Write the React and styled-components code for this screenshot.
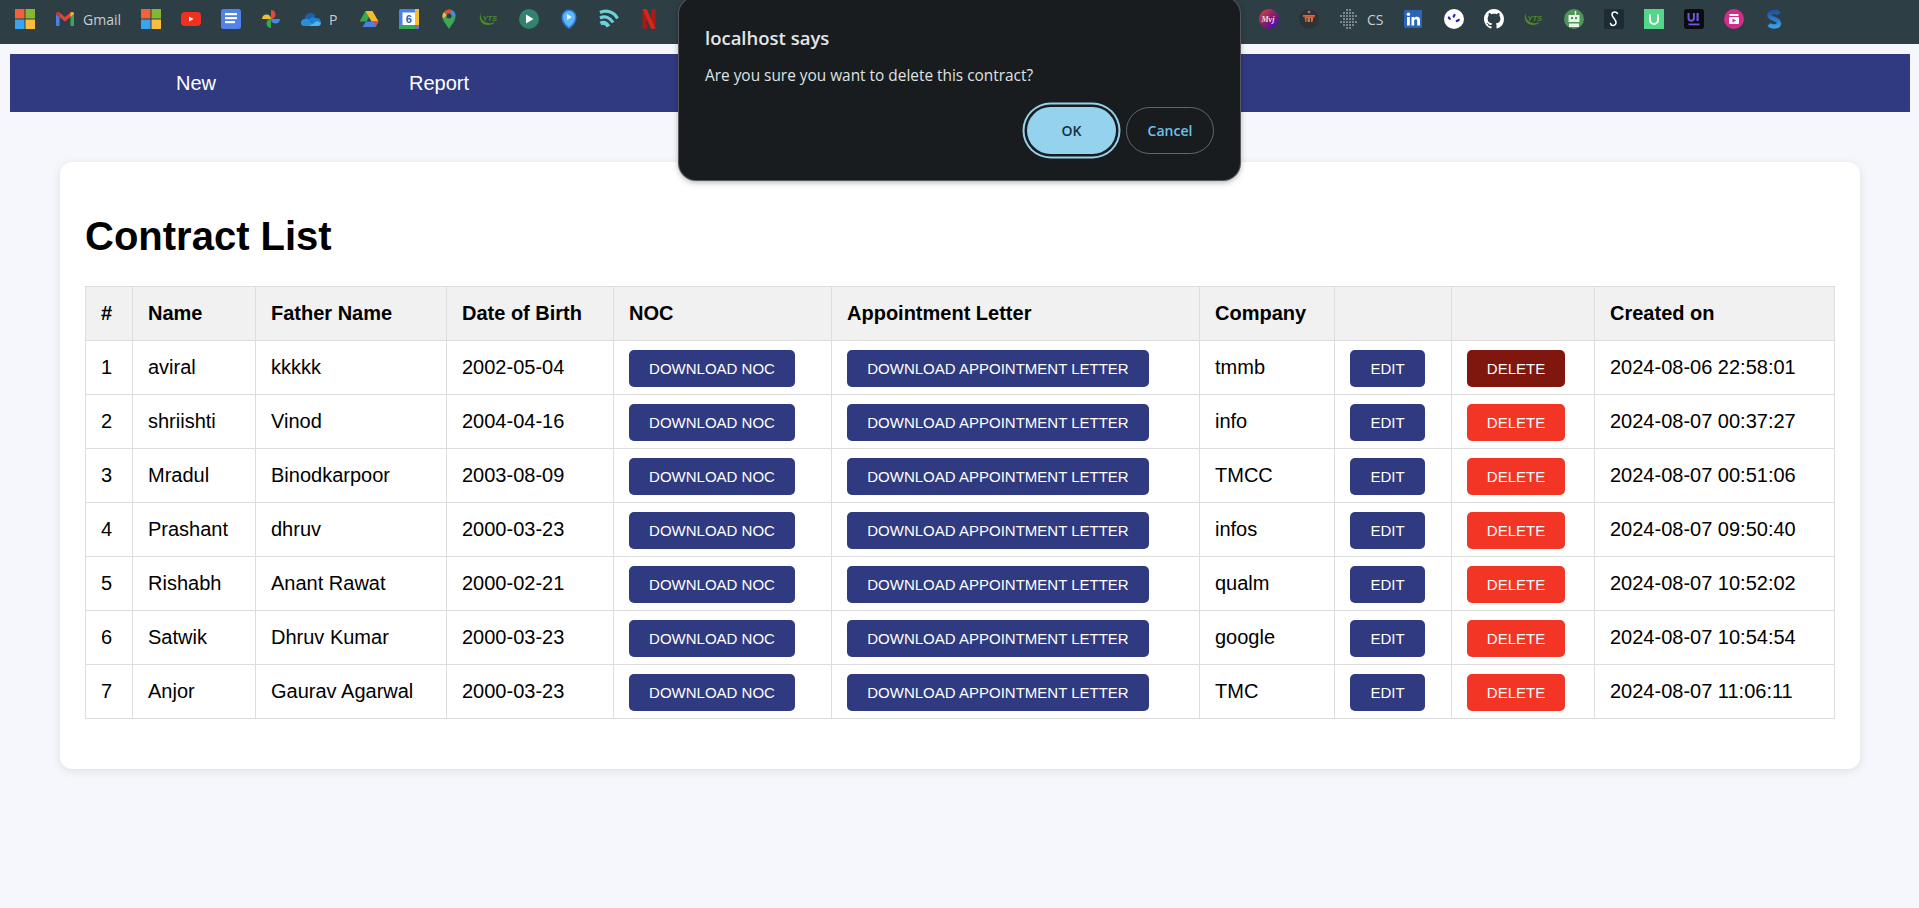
import React from "react";
import styled, { createGlobalStyle } from "styled-components";

const GlobalStyle = createGlobalStyle`
  html, body {
    margin: 0;
    padding: 0;
    height: 100%;
    overflow: hidden;
    background: #f5f7fc;
    font-family: "Liberation Sans", Arial, sans-serif;
  }
`;

/* ---------- bookmark icons ---------- */
const Ms = () => (
  <svg viewBox="0 0 20 20">
    <rect width="9.5" height="9.5" fill="#ee6337" />
    <rect x="10.5" width="9.5" height="9.5" fill="#86b731" />
    <rect y="10.5" width="9.5" height="9.5" fill="#3aa4ee" />
    <rect x="10.5" y="10.5" width="9.5" height="9.5" fill="#fdbd3c" />
  </svg>
);
const Gmail = () => (
  <svg viewBox="0 0 20 20">
    <path d="M1 5v12h3.500V8z" fill="#4a7fe8" />
    <path d="M15.500 8v9H19V5z" fill="#3aa757" />
    <path d="M1 5c0-2 2-2.600 3.500-1.500L10 8l5.500-4.500C17 2.400 19 3 19 5l-3.500 3L10 12.500 4.500 8z" fill="#e3443a" />
    <path d="M15.500 3.500C17 2.400 19 3 19 5l-3.500 3z" fill="#f5bb2c" />
    <path d="M1 5c0-2 2-2.600 3.500-1.500V8z" fill="#b5372f" />
  </svg>
);
const Youtube = () => (
  <svg viewBox="0 0 20 20">
    <rect y="3" width="20" height="14" rx="4" fill="#f2301f" />
    <path d="M8 7.500v5l4.500-2.500z" fill="#fff" />
  </svg>
);
const Docs = () => (
  <svg viewBox="0 0 20 20">
    <rect width="20" height="20" rx="2.500" fill="#4f82ea" />
    <rect x="4" y="4" width="12" height="2.200" fill="#fff" />
    <rect x="4" y="8" width="12" height="2.200" fill="#fff" />
    <rect x="4" y="12" width="10" height="2.200" fill="#fff" />
  </svg>
);
const Photos = () => (
  <svg viewBox="0 0 20 20">
    <path d="M10 10V1a4.500 4.500 0 0 1 0 9z" fill="#e2483d" />
    <path d="M10 10h9a4.500 4.500 0 0 1-9 0z" fill="#4a85ec" />
    <path d="M10 10v9a4.500 4.500 0 0 1 0-9z" fill="#35a853" />
    <path d="M10 10H1a4.500 4.500 0 0 1 9 0z" fill="#f7bc2c" />
  </svg>
);
const OneDrive = () => (
  <svg viewBox="0 0 20 20">
    <path d="M4 8a6 6 0 0 1 10.500-1.500L9 13 3 12z" fill="#1c5fb0" />
    <path d="M8 10.500a5 5 0 0 1 7-1.500c3-.2 5 2 5 4.500L13 16z" fill="#1a84d4" />
    <path d="M4 10c2-.5 4 0 5 2l5 5H3a3 3 0 0 1-3-3.500C0 11 2 10 4 10z" fill="#2b8fdb" />
    <path d="M8 17l8-5 4 2c0 2-1.500 3-3 3z" fill="#4fb5ee" />
  </svg>
);
const Drive = () => (
  <svg viewBox="0 0 20 20">
    <path d="M6.500 2h7L7.500 12.500H.5z" fill="#34a853" />
    <path d="M6.500 2h7l6 10.500h-7z" fill="#f7bb2a" />
    <path d="M3.500 18l3.500-5.500h12.500L16.500 18z" fill="#4a80e8" />
    <path d="M16.500 18l3-5.500h-4.500z" fill="#e2483d" />
  </svg>
);
const CalNum = styled.text`
  font: 700 11px "Liberation Sans", sans-serif;
  fill: #2a5fc8;
`;
const Calendar = () => (
  <svg viewBox="0 0 20 20">
    <rect width="20" height="20" rx="1.500" fill="#4a80e8" />
    <rect x="16" width="4" height="16" fill="#f6bd2e" />
    <rect y="16" width="16" height="4" fill="#34a853" />
    <path d="M16 16h4l-4 4z" fill="#e2483d" />
    <rect x="3.500" y="3.500" width="12.500" height="12.500" fill="#fff" />
    <CalNum x="9.800" y="13.800" textAnchor="middle">6</CalNum>
  </svg>
);
const Maps = () => (
  <svg viewBox="0 0 20 20">
    <path d="M10 20C7 15 3.500 12 3.500 7a6.500 6.500 0 0 1 13 0c0 5-3.500 8-6.500 13z" fill="#3ca856" />
    <path d="M4 9.500C3.600 8.800 3.500 8 3.500 7 3.500 5.500 4 4.300 5 3.200L8 6z" fill="#f6bd2e" />
    <path d="M5 3.200A6.500 6.500 0 0 1 10 .5c1 0 2 .3 3 .8L8 6z" fill="#e2483d" />
    <path d="M13 1.300A6.500 6.500 0 0 1 16.500 7L12 8z" fill="#4a85ec" />
    <circle cx="10" cy="7" r="2.500" fill="#2e3e45" />
  </svg>
);
const YtsLabel = styled.text`
  font: italic 700 7.500px "Liberation Sans", sans-serif;
  fill: #4b8a28;
`;
const Yts = () => (
  <svg viewBox="0 0 20 20">
    <path d="M1.500 4C-.5 9 1.500 16 9 16c3 0 5.500-1 7-3-2 1-4 1.500-6.500 1C4 13.500 1.500 9.500 1.500 4z" fill="#4b8a28" />
    <YtsLabel x="3.500" y="12">YTS</YtsLabel>
  </svg>
);
const PlayRound = () => (
  <svg viewBox="0 0 20 20">
    <circle cx="10" cy="10" r="10" fill="#30846f" />
    <path d="M7 5.500v9l7.500-4.500z" fill="#fff" />
  </svg>
);
const BluePin = () => (
  <svg viewBox="0 0 20 20">
    <path d="M10 20C5 17 2.500 12.500 2.500 8a7.500 7.500 0 0 1 15 0c0 4.500-2.500 9-7.500 12z" fill="#2b7be0" />
    <path d="M10 18c-4-3-6-6.500-6-10a6 6 0 0 1 12 0c0 3.500-2 7-6 10z" fill="#5fb8f5" />
    <path d="M8 5v6l5-3z" fill="#e8f6ff" />
  </svg>
);
const Wave = () => (
  <svg viewBox="0 0 20 20" fill="none" stroke="#6fd0da">
    <path d="M1 3.500c6-3 14-1 17.500 6" strokeWidth="3.200" />
    <path d="M1 9c5-2.500 10-.5 13 4.500" strokeWidth="3.200" />
    <path d="M1.500 14.500c3-1.500 6-.5 8 3" strokeWidth="4" />
  </svg>
);
const Netflix = () => (
  <svg viewBox="0 0 20 20">
    <path d="M3.500 0h4.300v20l-4.300-.5z" fill="#a61b14" />
    <path d="M12.200 0h4.300v19.500l-4.300.5z" fill="#a61b14" />
    <path d="M3.500 0h4.300l8.700 19.500-4.300.5z" fill="#d3261c" />
  </svg>
);
const RedEdge = () => (
  <svg viewBox="0 0 20 20">
    <circle cx="10" cy="10" r="10" fill="#c9302a" />
  </svg>
);
const MvjLabel = styled.text`
  font: italic 700 8px "Liberation Serif", serif;
  fill: #f4dce4;
`;
const Mvj = () => (
  <svg viewBox="0 0 20 20">
    <defs>
      <linearGradient id="mvj" x1="0" y1="0" x2="1" y2="1">
        <stop offset="0" stopColor="#d8503c" />
        <stop offset="0.500" stopColor="#8a1c6c" />
        <stop offset="1" stopColor="#2a10c0" />
      </linearGradient>
    </defs>
    <circle cx="10" cy="10" r="10" fill="url(#mvj)" />
    <MvjLabel x="2.500" y="13">Mvj</MvjLabel>
  </svg>
);
const Pot = () => (
  <svg viewBox="0 0 20 20">
    <circle cx="10" cy="10" r="10" fill="#2f3338" />
    <rect x="4" y="6" width="12" height="1.800" fill="#e2683a" />
    <path d="M5.500 8h9l-1 5h-7z" fill="#e2683a" />
    <rect x="7.500" y="9" width="1" height="4" fill="#2f3338" />
    <rect x="11" y="9" width="1" height="4" fill="#2f3338" />
    <circle cx="10" cy="3" r="1.300" fill="#e2683a" />
  </svg>
);
const dots = [];
[[2, 7, 13], [5, 4, 7, 10, 13, 16], [8, 1, 4, 7, 10, 13, 16, 19], [11, 1, 4, 7, 10, 13, 16, 19], [14, 4, 7, 10, 13, 16], [17, 7, 13]].forEach(
  ([x, ...ys]) => ys.forEach((y) => dots.push([x, y]))
);
const Dots = () => (
  <svg viewBox="0 0 20 20">
    {dots.map(([x, y]) => (
      <circle key={`${x}-${y}`} cx={x} cy={y} r="0.800" fill="#dfe5e8" />
    ))}
  </svg>
);
const Linkedin = () => (
  <svg viewBox="0 0 20 20">
    <rect y="1" width="18" height="18" rx="1" fill="#2a66b8" />
    <rect x="3" y="8" width="2.800" height="8.500" fill="#fff" />
    <circle cx="4.400" cy="5.200" r="1.700" fill="#fff" />
    <path d="M7.500 8h2.700v1.200c.6-.9 1.600-1.400 2.800-1.400 2.300 0 3 1.500 3 3.800v4.900h-2.800v-4.300c0-1.100-.3-2-1.400-2-1.200 0-1.600.9-1.600 2v4.300H7.500z" fill="#fff" />
  </svg>
);
const Ticks = () => (
  <svg viewBox="0 0 20 20">
    <circle cx="10" cy="10" r="10" fill="#fff" />
    <g stroke="#2a1fb0" strokeWidth="2.200" strokeLinecap="round">
      <path d="M4.800 8.500l1 1.300" />
      <path d="M10.500 6l-.8 1.500" />
      <path d="M14.800 11l-2 1" />
    </g>
  </svg>
);
const Github = () => (
  <svg viewBox="0 0 16 16">
    <path
      fill="#fff"
      d="M8 0C3.580 0 0 3.580 0 8c0 3.540 2.290 6.530 5.470 7.590.4.070.55-.17.55-.38 0-.19-.01-.82-.01-1.490-2.010.37-2.530-.49-2.690-.94-.09-.23-.48-.94-.82-1.130-.28-.15-.68-.52-.01-.53.63-.01 1.080.58 1.230.82.720 1.210 1.870.87 2.330.66.070-.52.280-.87.510-1.070-1.780-.2-3.640-.89-3.640-3.950 0-.87.310-1.590.82-2.150-.08-.2-.36-1.020.08-2.120 0 0 .67-.21 2.200.82.640-.18 1.320-.27 2-.27s1.360.09 2 .27c1.530-1.040 2.200-.82 2.200-.82.440 1.100.16 1.920.08 2.120.51.560.82 1.270.82 2.150 0 3.070-1.870 3.750-3.650 3.950.29.250.54.730.54 1.480 0 1.070-.01 1.930-.01 2.200 0 .21.150.46.550.38A8.013 8.013 0 0 0 16 8c0-4.420-3.580-8-8-8z"
    />
  </svg>
);
const Robot = () => (
  <svg viewBox="0 0 20 20">
    <circle cx="10" cy="10" r="10" fill="#4f9558" />
    <rect x="4.500" y="6" width="11" height="7" fill="#e8f2e8" />
    <rect x="7" y="8" width="2" height="2" fill="#4f9558" />
    <rect x="11" y="8" width="2" height="2" fill="#4f9558" />
    <rect x="10.800" y="2" width="1.400" height="4" fill="#e8f2e8" />
    <rect x="5" y="14.500" width="10" height="3.500" fill="#e8f2e8" />
  </svg>
);
const ScriptS = () => (
  <svg viewBox="0 0 20 20">
    <rect width="20" height="20" rx="2" fill="#1d2b35" />
    <path d="M13.500 4.500C12 2 8 2.800 8 5.500c0 3 4.500 5 4 8.500-.5 3-5 3.200-5.500.5" fill="none" stroke="#fff" strokeWidth="1.500" strokeLinecap="round" />
  </svg>
);
const UGreen = () => (
  <svg viewBox="0 0 20 20">
    <rect width="20" height="20" fill="#52d688" />
    <path d="M6 5.500V11a4 4 0 0 0 8 0V5.500" fill="none" stroke="#fff" strokeWidth="2" />
  </svg>
);
const UiBox = () => (
  <svg viewBox="0 0 20 20">
    <rect width="20" height="20" rx="3" fill="#0b0b10" />
    <path d="M4.500 4v5a2.700 2.700 0 0 0 5.400 0V4" fill="none" stroke="#6a5ae0" strokeWidth="2" />
    <rect x="12.500" y="4" width="2.200" height="8" fill="#6a5ae0" />
    <rect x="4.500" y="14.500" width="11" height="1.800" fill="#6a5ae0" />
  </svg>
);
const Clip = () => (
  <svg viewBox="0 0 20 20">
    <circle cx="10" cy="10" r="10" fill="#d42b8f" />
    <rect x="5" y="8" width="10" height="7" rx="1" fill="#fff" />
    <path d="M5.500 5h9v2h-9z" fill="#fff" />
    <path d="M8.500 9.500v4l3.500-2z" fill="#d42b8f" />
  </svg>
);
const BlueS = () => (
  <svg viewBox="0 0 20 20">
    <defs>
      <linearGradient id="blues" x1="0" y1="0" x2="0" y2="1">
        <stop offset="0" stopColor="#1b55a8" />
        <stop offset="1" stopColor="#34a0e8" />
      </linearGradient>
    </defs>
    <path d="M15 5C13 2 6 2 5.500 6c-.4 4 9.500 3.500 9.500 8 0 4-7 4.500-10 1.500" fill="none" stroke="url(#blues)" strokeWidth="4.500" />
  </svg>
);

/* ---------- layout ---------- */
const Bookmarks = styled.div`
  display: flex;
  align-items: center;
  height: 44px;
  padding-left: 5px;
  background: #2e3e45;
`;
const Mark = styled.div`
  display: flex;
  align-items: center;
  gap: 8px;
  padding: 0 10px;
  height: 44px;
  margin-top: -6px;
  color: #c6ced2;
  font: 14px "Open Sans", "Noto Sans", sans-serif;
  svg {
    display: block;
    width: 20px;
    height: 20px;
  }
`;
const MarkLabel = styled.span`
  min-width: 10px;
`;
const HiddenMarks = styled.div`
  width: 540px;
`;
const Nav = styled.nav`
  display: flex;
  align-items: center;
  height: 58px;
  margin: 10px 9px 0 10px;
  background: #303a80;
`;
const NavLink = styled.a`
  width: ${(p) => p.$w}px;
  color: #fff;
  font-size: 20px;
  margin-left: ${(p) => p.$ml}px;
`;
const Card = styled.main`
  box-sizing: border-box;
  width: 1800px;
  height: 607px;
  margin: 50px 0 0 60px;
  padding: 50px 25px 0;
  background: #fff;
  border-radius: 12px;
  box-shadow: 0 2px 10px rgba(0, 0, 0, 0.1);
`;
const Title = styled.h1`
  margin: 0 0 25px;
  font-size: 40px;
  line-height: 49px;
  font-weight: 700;
  color: #000;
`;
const Table = styled.table`
  width: 1749px;
  table-layout: fixed;
  border-collapse: collapse;
  font-size: 20px;
  color: #000;
`;
const Col = styled.col`
  width: ${(p) => p.$w}px;
`;
const Th = styled.th`
  height: 53px;
  padding: 0 15px;
  text-align: left;
  font-weight: 700;
  background: #f1f1f1;
  border: 1px solid #dddddd;
`;
const Td = styled.td`
  height: 53px;
  padding: 0 15px;
  border: 1px solid #dddddd;
  white-space: nowrap;
`;
const ActionButton = styled.button`
  display: block;
  box-sizing: border-box;
  width: ${(p) => p.$w}px;
  height: 37px;
  margin-top: 2px;
  padding: 0;
  border: none;
  border-radius: 5px;
  background: ${(p) => p.$bg || "#303a80"};
  color: #fff;
  font: 15px "Liberation Sans", Arial, sans-serif;
  text-transform: uppercase;
`;

/* ---------- browser confirm ---------- */
const Dialog = styled.div`
  position: absolute;
  top: -3px;
  left: 679px;
  box-sizing: border-box;
  width: 561px;
  height: 183px;
  padding: 28px 26px 0;
  background: #191c1f;
  border-radius: 17px;
  box-shadow: 0 0 0 1px #55595c, 0 2px 6px rgba(0, 0, 0, 0.35);
  font-family: "Open Sans", "Noto Sans", sans-serif;
`;
const DialogTitle = styled.div`
  color: #e3e6e8;
  font-size: 18.500px;
  line-height: 26px;
  font-weight: 600;
`;
const DialogText = styled.div`
  margin-top: 15px;
  color: #dfe2e4;
  font-size: 15.400px;
  line-height: 20px;
`;
const DialogActions = styled.div`
  display: flex;
  justify-content: flex-end;
  align-items: center;
  gap: 10px;
  margin-top: 21px;
`;
const OkButton = styled.button`
  box-sizing: border-box;
  width: 89px;
  height: 47px;
  border: none;
  border-radius: 24px;
  background: #94d2ee;
  color: #13303f;
  font: 600 14px "Open Sans", sans-serif;
  box-shadow: 0 0 0 2.500px #191c1f, 0 0 0 4.500px #94d2ee;
`;
const CancelButton = styled.button`
  box-sizing: border-box;
  width: 88px;
  height: 47px;
  border: 1px solid #62676a;
  border-radius: 24px;
  background: transparent;
  color: #6ec1ea;
  font: 600 14px "Open Sans", sans-serif;
`;

const leftMarks = [
  [Ms], [Gmail, "Gmail"], [Ms], [Youtube], [Docs], [Photos], [OneDrive, "P"], [Drive], [Calendar], [Maps],
  [Yts], [PlayRound], [BluePin], [Wave], [Netflix], [RedEdge],
];
const rightMarks = [
  [Mvj], [Pot], [Dots, "CS"], [Linkedin], [Ticks], [Github], [Yts], [Robot], [ScriptS], [UGreen], [UiBox], [Clip], [BlueS],
];

const contracts = [
  ["aviral", "kkkkk", "2002-05-04", "tmmb", "2024-08-06 22:58:01"],
  ["shriishti", "Vinod", "2004-04-16", "info", "2024-08-07 00:37:27"],
  ["Mradul", "Binodkarpoor", "2003-08-09", "TMCC", "2024-08-07 00:51:06"],
  ["Prashant", "dhruv", "2000-03-23", "infos", "2024-08-07 09:50:40"],
  ["Rishabh", "Anant Rawat", "2000-02-21", "qualm", "2024-08-07 10:52:02"],
  ["Satwik", "Dhruv Kumar", "2000-03-23", "google", "2024-08-07 10:54:54"],
  ["Anjor", "Gaurav Agarwal", "2000-03-23", "TMC", "2024-08-07 11:06:11"],
];
const colWidths = [47, 123, 191, 167, 218, 368, 135, 117, 143, 240];
const headers = ["#", "Name", "Father Name", "Date of Birth", "NOC", "Appointment Letter", "Company", "", "", "Created on"];

const renderMark = ([Icon, label], i) => (
  <Mark key={i}>
    <Icon />
    {label && <MarkLabel>{label}</MarkLabel>}
  </Mark>
);

export default function App() {
  return (
    <>
      <GlobalStyle />
      <Bookmarks>
        {leftMarks.map(renderMark)}
        <HiddenMarks />
        {rightMarks.map(renderMark)}
      </Bookmarks>
      <Nav>
        <NavLink $ml={166} $w={233}>New</NavLink>
        <NavLink $ml={0} $w={100}>Report</NavLink>
      </Nav>
      <Card>
        <Title>Contract List</Title>
        <Table>
          <colgroup>
            {colWidths.map((w, i) => (
              <Col key={i} $w={w} />
            ))}
          </colgroup>
          <thead>
            <tr>
              {headers.map((h, i) => (
                <Th key={i}>{h}</Th>
              ))}
            </tr>
          </thead>
          <tbody>
            {contracts.map((c, i) => (
              <tr key={c[0]}>
                <Td>{i + 1}</Td>
                <Td>{c[0]}</Td>
                <Td>{c[1]}</Td>
                <Td>{c[2]}</Td>
                <Td><ActionButton $w={166}>Download NOC</ActionButton></Td>
                <Td><ActionButton $w={302}>Download Appointment Letter</ActionButton></Td>
                <Td>{c[3]}</Td>
                <Td><ActionButton $w={75}>Edit</ActionButton></Td>
                <Td><ActionButton $w={98} $bg={i === 0 ? "#80170e" : "#f23525"}>Delete</ActionButton></Td>
                <Td>{c[4]}</Td>
              </tr>
            ))}
          </tbody>
        </Table>
      </Card>
      <Dialog>
        <DialogTitle>localhost says</DialogTitle>
        <DialogText>Are you sure you want to delete this contract?</DialogText>
        <DialogActions>
          <OkButton>OK</OkButton>
          <CancelButton>Cancel</CancelButton>
        </DialogActions>
      </Dialog>
    </>
  );
}
